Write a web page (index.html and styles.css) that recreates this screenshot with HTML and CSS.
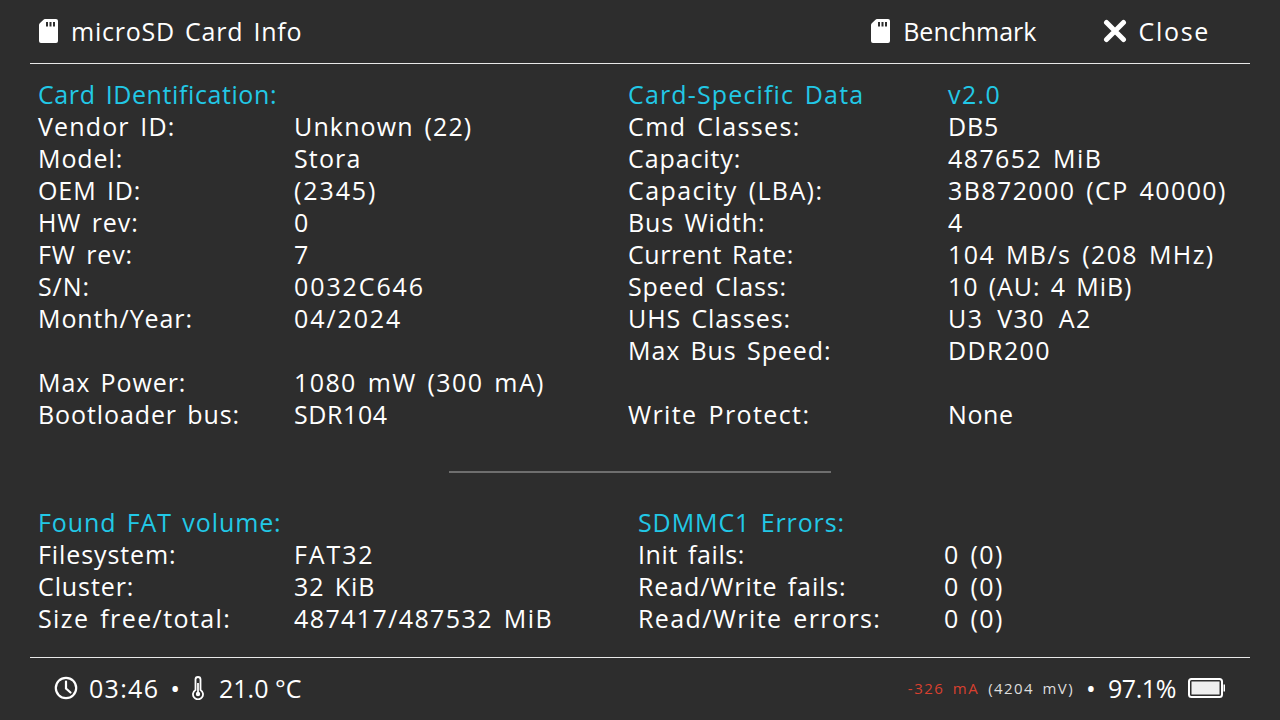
FILE: index.html
```html
<!DOCTYPE html>
<html>
<head>
    <meta charset="utf-8">
    <title>microSD Card Info</title>
    <link rel="stylesheet" href="styles.css">
</head>
<body>
    <svg class="defs" width="0" height="0">
        <symbol id="sd-icon" viewBox="0 0 19 24">
            <path fill-rule="evenodd" d="M6 0H17Q19 0 19 2V22Q19 24 17 24H2Q0 24 0 22V6Q0 5 1 4L4.500 .7Q5 0 6 0ZM7 3V7.500H9V3ZM10.500 3V7.500H12.500V3ZM14 3V7.500H16V3Z"/>
        </symbol>
    </svg>

    <header class="top-bar">
        <div class="top-title">
            <svg class="sd-icon"><use href="#sd-icon"/></svg>
            <span>microSD Card Info</span>
        </div>
        <div class="top-action top-benchmark">
            <svg class="sd-icon"><use href="#sd-icon"/></svg>
            <span>Benchmark</span>
        </div>
        <div class="top-action top-close">
            <svg class="close-icon" viewBox="0 0 24 24"><path d="M3.500 3.500L20.500 20.500M20.500 3.500L3.500 20.500"/></svg>
            <span>Close</span>
        </div>
    </header>

    <main class="content">
        <section class="info-row info-upper">
            <div class="info-table table-card">
                <div class="cyan tight">Card IDentification:</div><div></div>
                <div class="mid">Vendor ID:</div><div class="mid">Unknown (22)</div>
                <div>Model:</div><div class="mid">Stora</div>
                <div>OEM ID:</div><div class="num">(2345)</div>
                <div>HW rev:</div><div>0</div>
                <div>FW rev:</div><div>7</div>
                <div>S/N:</div><div class="num">0032C646</div>
                <div>Month/Year:</div><div class="num">04/2024</div>
                <div class="blank"></div><div></div>
                <div>Max Power:</div><div class="wide">1080 mW (300 mA)</div>
                <div>Bootloader bus:</div><div class="tight">SDR104</div>
            </div>
            <div class="info-table table-csd">
                <div class="cyan mid">Card-Specific Data</div><div class="cyan wide">v2.0</div>
                <div class="wide">Cmd Classes:</div><div>DB5</div>
                <div>Capacity:</div><div class="wide">487652 MiB</div>
                <div class="wide">Capacity (LBA):</div><div class="wide">3B872000 (CP 40000)</div>
                <div>Bus Width:</div><div>4</div>
                <div class="tight">Current Rate:</div><div class="wide">104 MB/s (208 MHz)</div>
                <div>Speed Class:</div><div>10 (AU: 4 MiB)</div>
                <div>UHS Classes:</div><div class="wide spaced">U3 V30 A2</div>
                <div>Max Bus Speed:</div><div class="wide">DDR200</div>
                <div class="blank"></div><div></div>
                <div class="wide">Write Protect:</div><div class="tight">None</div>
            </div>
        </section>

        <hr class="divider">

        <section class="info-row info-lower">
            <div class="info-table table-card">
                <div class="cyan">Found FAT volume:</div><div></div>
                <div>Filesystem:</div><div class="num">FAT32</div>
                <div>Cluster:</div><div>32 KiB</div>
                <div class="wide">Size free/total:</div><div class="wide">487417/487532 MiB</div>
            </div>
            <div class="info-table table-errors">
                <div class="cyan">SDMMC1 Errors:</div><div></div>
                <div class="tight">Init fails:</div><div class="wide">0 (0)</div>
                <div>Read/Write fails:</div><div class="wide">0 (0)</div>
                <div class="wide">Read/Write errors:</div><div class="wide">0 (0)</div>
            </div>
        </section>
    </main>

    <footer class="status-bar">
        <div class="status-left">
            <svg class="clock-icon" viewBox="0 0 24 24"><circle cx="12" cy="12" r="10.200"/><path d="M12 5.500V12.500L16.500 16.500"/></svg>
            <span class="time">03:46</span>
            <span class="dot">•</span>
            <svg class="thermo-icon" viewBox="0 0 14 24"><path d="M4.500 14V3.500A2.500 2.500 0 0 1 9.500 3.500V14A5 5 0 1 1 4.500 14Z"/><circle class="thermo-bulb" cx="7" cy="18" r="2.200"/><path d="M7 7V17"/></svg>
            <span class="temp">21.0 °C</span>
        </div>
        <div class="status-right">
            <div class="power">
                <span class="current">-326 mA</span>
                <span class="voltage">(4204 mV)</span>
            </div>
            <span class="dot">•</span>
            <span class="percent">97.1%</span>
            <svg class="battery-icon" viewBox="0 0 38 20"><rect class="battery-shell" x="1" y="1" width="33" height="18" rx="2.500"/><rect class="battery-fill" x="3.500" y="3.500" width="28" height="13"/><path class="battery-tip" d="M35.500 6.500H37V13.500H35.500Z"/></svg>
        </div>
    </footer>
</body>
</html>
```

FILE: styles.css
```css
* {
    box-sizing: border-box;
    margin: 0;
    padding: 0;
}

body {
    width: 1280px;
    height: 720px;
    overflow: hidden;
    background-color: #2d2d2d;
    color: #fff;
    font-family: "Open Sans", "Lato", sans-serif;
    font-size: 25px;
    letter-spacing: 0.9px;
    word-spacing: 3px;
    display: flex;
    flex-direction: column;
}

.defs {
    position: absolute;
}

.top-bar {
    height: 64px;
    margin: 0 30px;
    padding-bottom: 2px;
    border-bottom: 1px solid #e8e8e8;
    display: flex;
    align-items: center;
}

.top-title,
.top-action {
    display: flex;
    align-items: center;
}

.top-title {
    margin-left: 9px;
    gap: 13px;
    flex: 1;
    letter-spacing: 0.75px;
}

.top-action {
    gap: 13px;
}

.top-benchmark {
    letter-spacing: 0;
}

.top-close {
    margin-left: 67px;
    margin-right: 40px;
    gap: 11px;
    letter-spacing: 1.7px;
}

.sd-icon {
    width: 19px;
    height: 24px;
    fill: #fff;
}

.close-icon {
    width: 24px;
    height: 24px;
    fill: none;
    stroke: #fff;
    stroke-width: 5;
    stroke-linecap: round;
}

.content {
    flex: 1;
    padding: 14px 30px 0;
}

.info-row {
    display: flex;
}

.info-table {
    display: grid;
    grid-auto-rows: 32px;
    line-height: 32px;
    white-space: nowrap;
}

.table-card {
    margin-left: 8px;
    width: 590px;
    grid-template-columns: 256px 1fr;
}

.table-csd {
    grid-template-columns: 320px 1fr;
}

.table-errors {
    margin-left: 10px;
    grid-template-columns: 306px 1fr;
}

.blank {
    height: 32px;
}

.cyan {
    color: #22c8e6;
}

.num {
    letter-spacing: 1.9px;
}

.wide {
    letter-spacing: 1.4px;
}

.mid {
    letter-spacing: 1.15px;
}

.tight {
    letter-spacing: 0.6px;
}

.spaced {
    word-spacing: 6px;
}

.divider {
    width: 382px;
    margin: 41px auto 33px;
    border: 0;
    border-top: 2px solid #6e6e6e;
}

.status-bar {
    height: 63px;
    margin: 0 30px;
    border-top: 1px solid #e8e8e8;
    padding: 0 24px 2px;
    display: flex;
    align-items: center;
    justify-content: space-between;
}

.status-left,
.status-right,
.power {
    display: flex;
    align-items: center;
}

.status-left {
    gap: 11px;
}

.status-right {
    gap: 12px;
}

.power {
    gap: 9px;
}

.time {
    letter-spacing: 1.3px;
}

.temp {
    margin-left: 3px;
    letter-spacing: 0;
    word-spacing: 0;
}

.dot {
    font-size: 26px;
    letter-spacing: 0;
}

.clock-icon {
    width: 24px;
    height: 24px;
    fill: none;
    stroke: #fff;
    stroke-width: 2.200;
    stroke-linecap: round;
}

.thermo-icon {
    width: 14px;
    height: 24px;
    fill: none;
    stroke: #fff;
    stroke-width: 1.800;
}

.thermo-bulb {
    fill: #fff;
    stroke: none;
}

.current {
    color: #d8402f;
    font-size: 15px;
    letter-spacing: 1.5px;
}

.voltage {
    color: #ddd;
    font-size: 15px;
    letter-spacing: 1.45px;
}

.percent {
    letter-spacing: -0.4px;
}

.battery-icon {
    width: 38px;
    height: 20px;
}

.battery-shell {
    fill: none;
    stroke: #fff;
    stroke-width: 2;
}

.battery-fill {
    fill: #eee;
}

.battery-tip {
    fill: #fff;
}
```
